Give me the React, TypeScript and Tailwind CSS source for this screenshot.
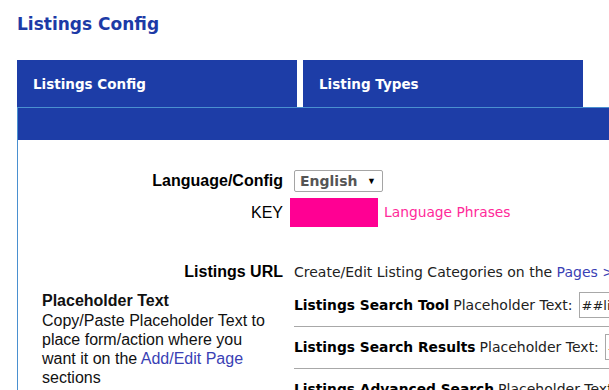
export default function App() {
  const verdana = "font-['DejaVu_Sans',Verdana,sans-serif]"
  const arial = "font-['Liberation_Sans',Arial,sans-serif]"

  const rows = [
    { name: "Listings Search Tool", value: "##listings_search_tool##" },
    { name: "Listings Search Results", value: "##listings_search_results##" },
    { name: "Listings Advanced Search", value: "##listings_advanced_search##" },
  ]

  return (
    <div className="relative h-[390px] w-[609px] overflow-hidden bg-white">
      {/* Title */}
      <h1 className={`${verdana} pl-[17px] pt-[12px] text-[17px] font-bold leading-[24px] text-[#1c3aa6]`}>
        Listings Config
      </h1>

      {/* Tabs */}
      <div className="mt-[24px] flex gap-[6px] pl-[17px]">
        {["Listings Config", "Listing Types"].map(t => (
          <div
            key={t}
            className={`${verdana} flex h-[47px] w-[280px] shrink-0 items-center bg-[#1d3da7] pl-[16px] pt-[2px] text-[13.5px] font-bold text-white`}
          >
            {t}
          </div>
        ))}
      </div>

      {/* Panel */}
      <div className="ml-[17px] w-[800px] border-l border-t border-[#4a90d0]">
        <div className="h-[32px] bg-[#1d3da7]" />

        <div className="pl-[24px] pt-[29px]">
          {/* Language */}
          <div className="grid grid-cols-[245px_1fr] items-center gap-x-[7px]">
            <div className={`${arial} pr-[4px] text-right text-[16px] font-bold text-black`}>Language/Config</div>
            <div>
              <div className="flex h-[22px] w-[89px] items-center justify-between rounded-[2px] border border-[#a5a5a5] pl-[5px] pr-[6px]">
                <span className={`${verdana} text-[14px] font-bold text-[#555]`}>English</span>
                <span className="text-[9px] text-black">▼</span>
              </div>
            </div>
          </div>

          {/* Key */}
          <div className="mt-[5px] flex items-center">
            <div className={`${arial} w-[241px] text-right text-[16px] text-black`}>KEY</div>
            <div className="ml-[7px] h-[29px] w-[88px] bg-[#ff0093]" />
            <a className={`${verdana} ml-[6px] text-[13.8px] text-[#ff2a9a]`}>Language Phrases</a>
          </div>

          {/* URL */}
          <div className="mt-[33px] grid grid-cols-[245px_1fr] items-center gap-x-[7px]">
            <div className={`${arial} pr-[4px] text-right text-[16px] font-bold text-black`}>Listings URL</div>
            <div className={`${verdana} whitespace-nowrap text-[14px] text-[#222]`}>
              Create/Edit Listing Categories on the <a className="text-[#3a3fb5]">Pages &gt; Listings</a>
            </div>
          </div>

          {/* Placeholders */}
          <div className="mt-[1px] grid grid-cols-[245px_1fr] gap-x-[7px]">
            <div className={`${arial} pt-[6px] text-[16px] leading-[19px] text-[#111]`}>
              <div className="font-bold">Placeholder Text</div>
              <p className="mt-[1px] w-[236px]">
                Copy/Paste Placeholder Text to place form/action where you want it on the{" "}
                <a className="text-[#3a3fb5]">Add/Edit Page</a> sections
              </p>
            </div>
            <div>
              {rows.map(r => (
                <div key={r.name} className="border-b border-[#a8a8a8] pb-[8px] pt-[7px]">
                  <div className={`${verdana} flex items-center whitespace-nowrap text-[14px] text-[#222]`}>
                    <span className="text-[13.8px] font-bold text-black">{r.name}</span>
                    <span className="ml-[4px]">Placeholder Text:</span>
                    <input
                      readOnly
                      value={r.value}
                      className={`${verdana} ml-[6px] h-[26px] w-[220px] border border-[#a8a8a8] px-[2px] text-[13px] text-[#222]`}
                    />
                  </div>
                </div>
              ))}
            </div>
          </div>
        </div>
      </div>
    </div>
  )
}
